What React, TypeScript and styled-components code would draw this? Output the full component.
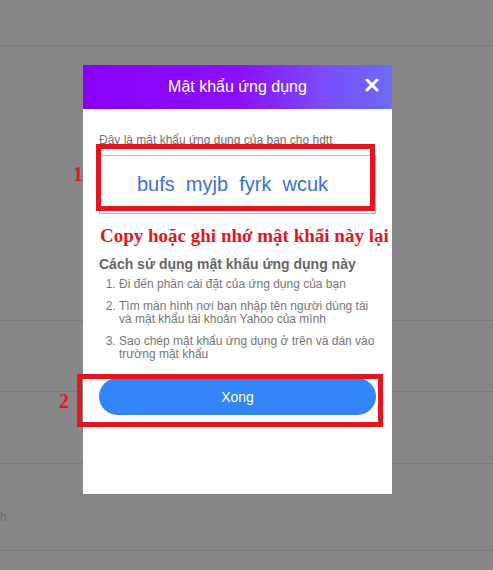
import React from "react";
import styled, { createGlobalStyle } from "styled-components";

const GlobalStyle = createGlobalStyle`
  html, body {
    margin: 0;
    padding: 0;
    background: #878787;
  }
  body {
    font-family: "Liberation Sans", Arial, sans-serif;
  }
`;

const Page = styled.div`
  position: relative;
  width: 493px;
  height: 570px;
  overflow: hidden;
  background: #878787;
`;

const BackdropRow = styled.div<{ $h: number }>`
  height: ${(p) => p.$h}px;
  border-bottom: 1px solid #7b7b7b;
  box-sizing: border-box;
  display: flex;
  align-items: flex-end;
`;

const BackdropText = styled.span`
  font-size: 12px;
  color: #6b6b6b;
  margin: 0 0 26px 0;
`;

const Modal = styled.div`
  position: absolute;
  left: 83px;
  top: 65px;
  width: 309px;
  height: 429px;
  background: #fff;
  display: flex;
  flex-direction: column;
`;

const Header = styled.div`
  position: relative;
  height: 44px;
  display: flex;
  align-items: center;
  justify-content: center;
  background: linear-gradient(
    to right,
    #8a00fb 0%,
    #8a10fb 50%,
    #7a4cfb 78%,
    #6c6cfa 100%
  );
`;

const Title = styled.h1`
  margin: 0;
  font-size: 16px;
  font-weight: normal;
  color: #fff;
`;

const CloseButton = styled.button`
  position: absolute;
  right: 13px;
  top: 13px;
  width: 14px;
  height: 14px;
  padding: 0;
  border: none;
  background: none;
  cursor: pointer;
  display: flex;
`;

const Body = styled.div`
  padding: 24px 16px 0;
  display: flex;
  flex-direction: column;
`;

const Subtitle = styled.p`
  margin: 0;
  font-size: 12px;
  line-height: 14px;
  color: #707070;
`;

const PasswordWrap = styled.div`
  position: relative;
  margin-top: 8px;
`;

const PasswordBox = styled.div`
  height: 59px;
  box-sizing: border-box;
  border: 1px solid #a8bbd6;
  display: flex;
  align-items: center;
  justify-content: center;
  padding-right: 10px;
  font-size: 20px;
  color: #3b72d4;
  white-space: pre;
`;

const Annotation = styled.div<{
  $top: number;
  $left: number;
  $right: number;
  $bottom: number;
}>`
  position: absolute;
  top: ${(p) => p.$top}px;
  left: ${(p) => p.$left}px;
  right: ${(p) => p.$right}px;
  bottom: ${(p) => p.$bottom}px;
  border: 5px solid #e3161f;
  pointer-events: none;
`;

const StepNumber = styled.span<{ $left: number; $top: number }>`
  position: absolute;
  left: ${(p) => p.$left}px;
  top: ${(p) => p.$top}px;
  font-family: "Liberation Serif", "Times New Roman", serif;
  font-weight: bold;
  font-size: 20px;
  line-height: 20px;
  color: #e3161f;
`;

const Reminder = styled.p`
  margin: 11px -6px 0 1px;
  font-family: "Liberation Serif", "Times New Roman", serif;
  font-weight: bold;
  font-size: 19px;
  line-height: 22px;
  color: #e3161f;
  white-space: nowrap;
`;

const HowTo = styled.h2`
  margin: 9px 0 0;
  font-size: 14px;
  line-height: 17px;
  font-weight: bold;
  color: #666;
`;

const Steps = styled.ol`
  margin: 5px 0 0;
  padding: 0 0 0 20px;
  font-size: 12px;
  line-height: 13px;
  color: #777;

  li + li {
    margin-top: 9px;
  }
`;

const ButtonWrap = styled.div`
  position: relative;
  margin-top: 17px;
`;

const DoneButton = styled.button`
  width: 100%;
  height: 37px;
  border: none;
  border-radius: 19px;
  background: #3385f8;
  color: #fff;
  font-family: "Liberation Sans", Arial, sans-serif;
  font-size: 14px;
  cursor: pointer;
`;

const App: React.FC = () => {
  return (
    <>
      <GlobalStyle />
      <Page>
        <BackdropRow $h={46} />
        <BackdropRow $h={275} />
        <BackdropRow $h={71} />
        <BackdropRow $h={72} />
        <BackdropRow $h={87}>
          <BackdropText>h.</BackdropText>
        </BackdropRow>

        <Modal>
          <Header>
            <Title>Mật khẩu ứng dụng</Title>
            <CloseButton aria-label="Đóng">
              <svg width="14" height="14" viewBox="0 0 14 14">
                <path
                  d="M2 2 L12 12 M12 2 L2 12"
                  stroke="#fff"
                  strokeWidth="3"
                  strokeLinecap="round"
                />
              </svg>
            </CloseButton>
          </Header>

          <Body>
            <Subtitle>Đây là mật khẩu ứng dụng của bạn cho hdtt</Subtitle>

            <PasswordWrap>
              <PasswordBox>bufs  myjb  fyrk  wcuk</PasswordBox>
              <Annotation $top={-11} $left={-3} $right={1} $bottom={3} />
              <StepNumber $left={-26} $top={9}>
                1
              </StepNumber>
            </PasswordWrap>

            <Reminder>Copy hoặc ghi nhớ mật khẩi này lại</Reminder>

            <HowTo>Cách sử dụng mật khẩu ứng dụng này</HowTo>
            <Steps>
              <li>Đi đến phần cài đặt của ứng dụng của bạn</li>
              <li>
                Tìm màn hình nơi bạn nhập tên người dùng tài và mật khẩu tài
                khoản Yahoo của mình
              </li>
              <li>
                Sao chép mật khẩu ứng dụng ở trên và dán vào trường mật khẩu
              </li>
            </Steps>

            <ButtonWrap>
              <DoneButton>Xong</DoneButton>
              <Annotation $top={-4} $left={-22} $right={-7} $bottom={-12} />
              <StepNumber $left={-40} $top={13}>
                2
              </StepNumber>
            </ButtonWrap>
          </Body>
        </Modal>
      </Page>
    </>
  );
};

export default App;
